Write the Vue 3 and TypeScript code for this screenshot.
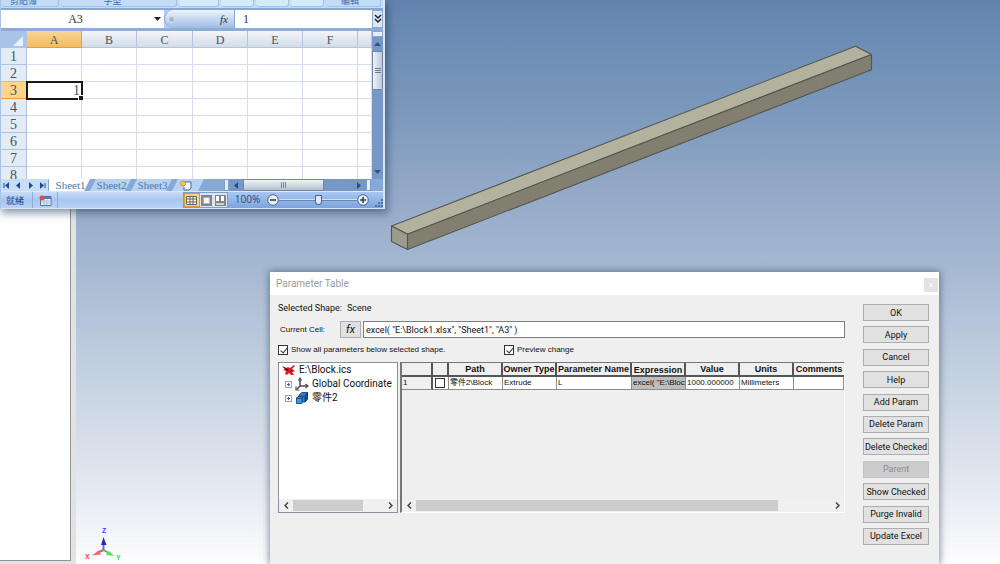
<script setup lang="ts">
import { ref } from 'vue'

interface Action { label: string; disabled?: boolean }

const columns: string[] = ['A', 'B', 'C', 'D', 'E', 'F', '']
const rows: number[] = [1, 2, 3, 4, 5, 6, 7, 8]
const sheets: string[] = ['Sheet1', 'Sheet2', 'Sheet3']
const cellName = ref('A3')
const cellValue = ref('1')
const expression = ref('excel( "E:\\Block1.xlsx", "Sheet1", "A3" )')
const showAll = ref(true)
const preview = ref(true)
const rowChecked = ref(false)
const zoomLevel = ref(50)

const headings: string[] = ['', '', 'Path', 'Owner Type', 'Parameter Name', 'Expression', 'Value', 'Units', 'Comments']
const actions: Action[] = [
  { label: 'OK' },
  { label: 'Apply' },
  { label: 'Cancel' },
  { label: 'Help' },
  { label: 'Add Param' },
  { label: 'Delete Param' },
  { label: 'Delete Checked' },
  { label: 'Parent', disabled: true },
  { label: 'Show Checked' },
  { label: 'Purge Invalid' },
  { label: 'Update Excel' },
]
</script>

<template>
  <div class="desktop">
    <aside class="side"><div class="side-page"></div></aside>
    <main class="viewport"></main>
    <svg class="scene" viewBox="0 0 1000 564" preserveAspectRatio="xMinYMin meet" aria-label="Block model">
      <g stroke="#55564f" stroke-width="1.1" stroke-linejoin="round">
        <path d="M391.5 226 855.5 46.3 871.5 54.5 407.5 234.2Z" fill="#b2b29f" />
        <path d="M407.5 234.2 871.5 54.5V69.7L407.5 249.5Z" fill="#827f71" />
        <path d="M391.5 226 407.5 234.2V249.5L391.5 241.5Z" fill="#9b9b90" />
      </g>
      <g class="axes">
        <path d="M103.5 550V543" stroke="#6868e8" stroke-width="2" />
        <path d="M103.5 537 106.5 545H101Z" fill="#2c2caa" />
        <path d="M103.5 550 98 552.5" stroke="#d06060" stroke-width="2" />
        <path d="M92 555.5 98.5 550.5 101 554.5Z" fill="#f06868" />
        <path d="M103.5 550 108 552.5" stroke="#50b850" stroke-width="2" />
        <path d="M114 556 106 555 109 551Z" fill="#50e060" />
        <text x="102" y="533" fill="#4444ff">Z</text>
        <text x="85" y="559" fill="#ff4444">X</text>
        <text x="116" y="560" fill="#33dd44">Y</text>
      </g>
    </svg>

    <section class="excel" aria-label="Spreadsheet">
      <div class="ribbon">
        <span class="group clip">剪貼簿</span>
        <span class="group font">字型</span>
        <span class="group light wide"></span>
        <span class="group light"></span>
        <span class="group light"></span>
        <span class="group light"></span>
        <span class="group edit">編輯</span>
      </div>
      <div class="formula">
        <input v-model="cellName" class="name-box" aria-label="Name box" />
        <button class="drop" aria-label="Cell names"><svg width="7" height="4" viewBox="0 0 7 4"><path d="M0 0H7L3.500 4Z" fill="#222" /></svg></button>
        <button class="fx-strip" aria-label="Insert function"><span class="knob"></span><i>fx</i></button>
        <input v-model="cellValue" class="value-box" aria-label="Formula bar" />
        <button class="expand" aria-label="Expand"><svg width="8" height="10" viewBox="0 0 8 10" fill="none" stroke="#222" stroke-width="1.500"><path d="M1 1 4 4 7 1M1 5 4 8 7 5" /></svg></button>
      </div>
      <div class="sheet-area">
        <div class="sheet-clip">
          <table class="sheet">
            <colgroup>
              <col class="c-head" />
              <col v-for="(c, i) in columns" :key="i" :class="c ? 'c-' + c : 'c-rest'" />
            </colgroup>
            <thead>
              <tr>
                <th class="corner"><svg width="10" height="10" viewBox="0 0 10 10"><path d="M10 0V10H0Z" fill="#e9f0fa" /></svg></th>
                <th v-for="(c, i) in columns" :key="i" :class="{ on: c === 'A' }">{{ c }}</th>
              </tr>
            </thead>
            <tbody>
              <tr v-for="r in rows" :key="r">
                <th :class="{ on: r === 3 }">{{ r }}</th>
                <td v-for="(c, i) in columns" :key="i" :class="{ active: r === 3 && c === 'A' }">{{ r === 3 && c === 'A' ? cellValue : '' }}</td>
              </tr>
            </tbody>
          </table>
        </div>
        <div class="vbar">
          <span class="split"></span>
          <button aria-label="Scroll up"><svg width="7" height="4" viewBox="0 0 7 4"><path d="M0 4H7L3.500 0Z" fill="#35517f" /></svg></button>
          <span class="vthumb"><b></b><b></b><b></b></span>
          <button class="down" aria-label="Scroll down"><svg width="7" height="4" viewBox="0 0 7 4"><path d="M0 0H7L3.500 4Z" fill="#35517f" /></svg></button>
        </div>
      </div>
      <div class="tabs">
        <div class="navs">
          <button aria-label="First sheet"><svg width="7" height="7" viewBox="0 0 7 7"><path d="M1 1V6" stroke="#1d4b9a" /><path d="M6 0V7L2 3.500Z" fill="#1d4b9a" /></svg></button>
          <button aria-label="Previous sheet"><svg width="7" height="7" viewBox="0 0 7 7"><path d="M5 0V7L1 3.500Z" fill="#1d4b9a" /></svg></button>
          <button aria-label="Next sheet"><svg width="7" height="7" viewBox="0 0 7 7"><path d="M2 0V7L6 3.500Z" fill="#1d4b9a" /></svg></button>
          <button aria-label="Last sheet"><svg width="7" height="7" viewBox="0 0 7 7"><path d="M6 1V6" stroke="#1d4b9a" /><path d="M1 0V7L5 3.500Z" fill="#1d4b9a" /></svg></button>
        </div>
        <button v-for="(s, i) in sheets" :key="s" class="tab" :class="{ front: i === 0 }">{{ s }}</button>
        <button class="tab new" aria-label="New sheet"><svg width="14" height="11" viewBox="0 0 14 11"><path d="M4 2H12V8L10 10H5V7" fill="#f4f7fc" stroke="#4b6895" /><circle cx="4" cy="3.500" r="2.500" fill="#f7c565" stroke="#d3902e" /></svg></button>
        <span class="tab-rest"></span>
        <span class="grip"></span>
        <button class="arrow" aria-label="Scroll left"><svg width="4" height="7" viewBox="0 0 4 7"><path d="M4 0V7L0 3.500Z" fill="#2b4a80" /></svg></button>
        <span class="hthumb"><b></b><b></b><b></b></span>
        <span class="htrack"></span>
        <button class="arrow" aria-label="Scroll right"><svg width="4" height="7" viewBox="0 0 4 7"><path d="M0 0V7L4 3.500Z" fill="#2b4a80" /></svg></button>
        <span class="grip"></span>
      </div>
      <div class="status">
        <span class="ready">就緒</span>
        <button class="macro" aria-label="Record macro"><svg width="13" height="11" viewBox="0 0 13 11"><path d="M1.500 1.500H12V10.500H1.500Z" fill="#f6f9ff" stroke="#5274ad" /><path d="M2 2H12V4H2Z" fill="#4c79bf" /><path d="M5 4V10M8 4V10M2 6H12M2 8H12" stroke="#a9bddb" /><circle cx="3" cy="3" r="2.500" fill="#dd4f35" /></svg></button>
        <span class="status-rest"></span>
        <div class="views">
          <button class="on" aria-label="Normal"><svg width="13" height="11" viewBox="0 0 13 11"><path d="M1.500 1.500H11.500V9.500H1.500ZM5 1V10M8 1V10M1 4H12M1 7H12" fill="#fff" stroke="#65625b" /></svg></button>
          <button aria-label="Page layout"><svg width="13" height="11" viewBox="0 0 13 11"><path d="M1 0H12V11H1Z" fill="#858585" /><path d="M3.500 2.500H9.500V8.500H3.500Z" fill="#f5f5f5" stroke="#b5b5b5" /></svg></button>
          <button aria-label="Page break"><svg width="13" height="11" viewBox="0 0 13 11"><path d="M1 0H12V11H1Z" fill="#858585" /><path d="M2 1H5V6H2ZM7 1H10V6H7Z" fill="#fff" /><path d="M2 8H10V10H2Z" fill="#d0d0d0" /></svg></button>
        </div>
        <span class="percent">100%</span>
        <button class="round" aria-label="Zoom out"><svg width="12" height="12" viewBox="0 0 12 12"><circle cx="6" cy="6" r="5.300" fill="#e9eef6" stroke="#4d6389" /><path d="M3 6H9" stroke="#33435e" stroke-width="1.600" /></svg></button>
        <input v-model="zoomLevel" class="zoom" type="range" min="0" max="100" aria-label="Zoom" />
        <button class="round" aria-label="Zoom in"><svg width="12" height="12" viewBox="0 0 12 12"><circle cx="6" cy="6" r="5.300" fill="#e9eef6" stroke="#4d6389" /><path d="M3 6H9M6 3V9" stroke="#33435e" stroke-width="1.600" /></svg></button>
        <span class="resize"><svg width="8" height="9" viewBox="0 0 8 9"><path d="M6 0H8V2H6ZM3 3H5V5H3ZM6 3H8V5H6ZM0 6H2V8H0ZM3 6H5V8H3ZM6 6H8V8H6Z" fill="#4c6ea8" /></svg></span>
      </div>
    </section>

    <section class="dialog" role="dialog" aria-label="Parameter Table">
      <header class="title"><span>Parameter Table</span><button aria-label="Close">x</button></header>
      <div class="body">
        <div class="content">
          <p class="selected"><span>Selected Shape:</span><span>Scene</span></p>
          <div class="cell-row">
            <label for="expr">Current Cell:</label>
            <button aria-label="Function"><i>fx</i></button>
            <input id="expr" v-model="expression" />
          </div>
          <div class="checks">
            <label><input v-model="showAll" type="checkbox" />Show all parameters below selected shape.</label>
            <label><input v-model="preview" type="checkbox" />Preview change</label>
          </div>
          <div class="panes">
            <div class="tree">
              <ul>
                <li class="root"><svg width="14" height="12" viewBox="0 0 14 12"><path d="M0 2 4 4 6 3 8 4 12 1 13 2 10 5 13 7 10 8 12 11 9 11 7 9 5 11 3 10 4 7 1 6 3 5Z" fill="#e01c24" /><path d="M0 2 4 4 7 6 5 7Z" fill="#4a1014" /><path d="M8 6 12 7 9 8Z" fill="#7c1218" /></svg>E:\Block.ics</li>
                <li><span class="plus"></span><svg width="14" height="14" viewBox="0 0 14 14" fill="none" stroke="#4a4a4a" stroke-width="1.500"><path d="M5 2V9H13M5 9 2 12" /><path d="M3.500 3.500 5 1 6.500 3.500M10.500 7 13 9 10.500 11M1 9.500V13H4.500" stroke-width="1.200" /></svg>Global Coordinate</li>
                <li><span class="plus"></span><svg width="14" height="14" viewBox="0 0 14 14" stroke="#0d335f" stroke-width=".8"><path d="M4 4 7 1.500H12.500V8L10 11H4Z" fill="#2c7fd0" /><path d="M10 4.500V11L12.500 8V1.500Z" fill="#15569d" /><path d="M1.500 7H7V12.500H1.500Z" fill="#3b98e6" /><path d="M1.500 7 3 5.500H8.500L7 7Z" fill="#72b9f2" /></svg>零件2</li>
              </ul>
              <div class="scroll">
                <button aria-label="Scroll left"><svg width="5" height="7" viewBox="0 0 5 7"><path d="M4 .5 1 3.500 4 6.500" /></svg></button>
                <span class="thumb"></span>
                <button aria-label="Scroll right"><svg width="5" height="7" viewBox="0 0 5 7"><path d="M1 .5 4 3.500 1 6.500" /></svg></button>
              </div>
            </div>
            <div class="grid">
              <table>
                <colgroup><col class="g-num" /><col class="g-check" /><col class="g-cell" /><col class="g-cell" /><col class="g-name" /><col class="g-expr" /><col class="g-cell" /><col class="g-cell" /><col /></colgroup>
                <thead><tr><th v-for="(h, i) in headings" :key="i" :class="{ low: i === 5 }">{{ h }}</th></tr></thead>
                <tbody>
                  <tr>
                    <td class="index">1</td>
                    <td class="tick"><input v-model="rowChecked" type="checkbox" aria-label="Select parameter 1" /></td>
                    <td>零件2\Block</td>
                    <td>Extrude</td>
                    <td>L</td>
                    <td class="picked">excel( "E:\Bloc</td>
                    <td>1000.000000</td>
                    <td>Millimeters</td>
                    <td></td>
                  </tr>
                </tbody>
              </table>
              <div class="scroll">
                <button aria-label="Scroll left"><svg width="5" height="7" viewBox="0 0 5 7"><path d="M4 .5 1 3.500 4 6.500" /></svg></button>
                <span class="thumb"></span>
                <button aria-label="Scroll right"><svg width="5" height="7" viewBox="0 0 5 7"><path d="M1 .5 4 3.500 1 6.500" /></svg></button>
              </div>
            </div>
          </div>
        </div>
        <div class="actions">
          <button v-for="a in actions" :key="a.label" :disabled="a.disabled">{{ a.label }}</button>
        </div>
      </div>
    </section>
  </div>
</template>

<style>
body { margin: 0; overflow: hidden; }
</style>

<style scoped>
* { box-sizing: border-box; }
button, input { font: inherit; color: inherit; margin: 0; padding: 0; border: 0; background: none; border-radius: 0; outline: 0; min-width: 0; }
button { display: flex; align-items: center; justify-content: center; }
svg { display: block; flex: none; }
.desktop { position: relative; display: flex; height: 100vh; overflow: hidden; background: #ececec; font-family: "Liberation Sans", "Noto Sans CJK TC", sans-serif; }
.side { flex: 0 0 76px; padding: 0 5px 3px 0; background: #e2e2e3; }
.side-page { height: 100%; background: #fefefe; border-right: 1px solid #8f9499; border-bottom: 1px solid #8f9499; }
.viewport { flex: 1; background: linear-gradient(#6184ae 0%, #6a8bb4 6%, #7c99bb 20%, #93a8c7 33%, #a5b8d2 47%, #cdd8e5 72%, #e3e8f1 86%, #fdfdfe 100%); }
.scene { position: absolute; inset: 0; width: 100%; }
.axes text { font: bold 7px "Liberation Sans", sans-serif; }

.excel { position: absolute; left: 0; top: 0; right: 61.5%; background: #b4cdf0; border-right: 2px solid #d8e6f7; border-left: 1px solid #a8c3e8; border-bottom: 1px solid #dbe6f4; box-shadow: 2px 3px 8px 1px #1e3a5c88; color: #44555a; font-family: "Liberation Serif", "Noto Sans CJK TC", serif; }
.ribbon { display: flex; gap: 2px; height: 10px; padding: 0 2px 3px 0; overflow: hidden; background: #c2daf5; border-bottom: 2px solid #86a7d4; }
.group { flex: 1 0 32px; height: 7px; overflow: hidden; display: flex; align-items: flex-end; justify-content: center; background: #c4dbf5; border: solid #a5c3e6; border-width: 0 1px 1px 0; border-radius: 0 0 3px 3px; font-size: 9px; line-height: 9px; color: #3f6cac; }
.group.light { background: #d5ebfa; }
.group.wide { flex-basis: 39px; }
.group.clip { flex-basis: 57px; padding-right: 12px; }
.group.font { flex-basis: 115px; padding-right: 12px; }
.group.edit { flex-basis: 54px; padding-right: 6px; }
.formula { display: flex; height: 18px; background: #b7cdec; font-size: 12px; color: #333; }
.name-box { flex: 0 0 149px; background: #fff; text-align: center; }
.drop { flex: 0 0 14px; background: #fff; }
.fx-strip { flex: 0 0 71px; justify-content: space-between; padding: 0 6px 0 3px; border: 1px solid #86a6d2; border-width: 0 1px 0 1px; border-radius: 9px 0 0 9px; background: linear-gradient(#edf4fd, #9fbce3); font-size: 11px; }
.knob { width: 7px; height: 7px; border-radius: 50%; background: #a9b5c7; border: 1px solid #dce5f1; }
.value-box { flex: 1; padding-left: 8px; background: #fff; }
.expand { flex: 0 0 11px; background: #dce7f5; border: 1px solid #8da9cf; }
.sheet-area { display: flex; height: 151px; border-top: 3px solid #8eacd6; }
.sheet-clip { flex: 1; min-width: 0; overflow: hidden; background: #fff; }
.sheet { width: 100%; table-layout: fixed; border-collapse: separate; border-spacing: 0; }
.c-head { width: 26px; }
.c-A, .c-B, .c-D, .c-E, .c-F { width: 55px; }
.c-C { width: 56px; }
.sheet th, .sheet td { height: 17px; padding: 2px 0 0; border: solid #d5dcec; border-width: 0 1px 1px 0; font-weight: 400; line-height: 14px; }
.sheet thead th { font-size: 12px; background: linear-gradient(#f3f6fa, #d3dbe8); border-color: #b4c4dc; }
.sheet thead .on { background: linear-gradient(#f9d597, #f0bd60); border-color: #ec9b3e; }
.sheet thead .corner { background: #a9c4ea; }
.corner svg { margin: 1px 3px 0 auto; }
.sheet tbody th { background: #e3ebf6; border-color: #aec3e0; font-size: 14px; }
.sheet tbody .on { background: #ffd58d; border-color: #ec9b3e; }
.sheet .active { position: relative; text-align: right; padding-right: 1px; font-size: 14px; outline: 2px solid #181818; outline-offset: -1px; }
.active::after { content: ""; position: absolute; right: -2px; bottom: -2px; width: 4px; height: 4px; background: #181818; border: solid #fff; border-width: 1px 0 0 1px; }
.vbar { flex: 0 0 11px; display: flex; flex-direction: column; background: #7598c8; }
.split { height: 6px; background: #e6eff9; border: 1px solid #87a5cf; }
.vbar button { height: 14px; }
.vthumb { height: 39px; display: flex; flex-direction: column; align-items: center; justify-content: center; gap: 1px; border: 1px solid #7286a5; background: linear-gradient(90deg, #f0f3f7, #bdc8d8); }
.vthumb b { width: 6px; height: 1px; background: #6d7b90; }
.vbar .down { margin-top: auto; }
.tabs { display: flex; height: 12px; padding-right: 12px; background: #87a9d8; font-size: 11px; line-height: 12px; color: #4c76a8; }
.navs { flex: 0 0 48px; display: flex; justify-content: space-around; background: #c7dcf6; border-right: 1px solid #88a7d2; }
.tab { flex: 0 0 41px; padding-left: 2px; background: #b9d2f2; clip-path: polygon(6px 0, 100% 0, calc(100% - 6px) 100%, 0 100%); }
.tab.front { background: #fff; clip-path: polygon(0 0, 100% 0, calc(100% - 6px) 100%, 0 100%); }
.tab.new { flex-basis: 32px; padding: 0 4px 0 0; }
.tab-rest { flex: 1; }
.grip { flex: 0 0 5px; background: #e5effb; border: 1px solid #7d9dcb; }
.arrow { flex: 0 0 14px; background: #7598c8; }
.hthumb { flex: 0 0 81px; display: flex; gap: 1px; align-items: center; justify-content: center; border: 1px solid #7286a5; background: linear-gradient(#f0f3f7, #b4bfcf); }
.hthumb b { width: 1px; height: 6px; background: #7a8799; }
.htrack { flex: 0 0 28px; background: #7598c8; }
.status { display: flex; align-items: center; height: 17px; border-top: 1px solid #d9e8fb; background: linear-gradient(#c9ddf7, #a8c6ef 50%, #b9d2f4); font: 10px "Open Sans", "Noto Sans CJK TC", sans-serif; color: #254a87; }
.ready { flex: 0 0 31px; padding-left: 5px; font-size: 9px; }
.macro { flex: 0 0 26px; align-self: stretch; border: solid #8eacd6; border-width: 0 1px; }
.status-rest { flex: 1; }
.views { display: flex; flex: 0 0 45px; align-self: stretch; border: 1px solid #7c9dcd; background: #dbe5f1; }
.views button { flex: 1; }
.views .on { background: #ffd77c; border: 1px solid #d49a38; }
.percent { flex: 0 0 39px; text-align: center; align-self: stretch; background: linear-gradient(#a9c7f1, #7da4dd); line-height: 15px; }
.round { flex: 0 0 12px; align-self: stretch; background: linear-gradient(#a9c7f1, #7da4dd); }
.zoom { flex: 0 0 78px; align-self: stretch; appearance: none; background: linear-gradient(#a9c7f1, #7da4dd); }
.zoom::-webkit-slider-runnable-track { height: 2px; background: #d5e2f4; border-bottom: 1px solid #6686b8; }
.zoom::-webkit-slider-thumb { appearance: none; width: 7px; height: 10px; margin-top: -4px; background: #dfe8f4; border: 1px solid #4d6389; border-radius: 1px 1px 4px 4px; }
.resize { flex: 0 0 14px; align-self: stretch; display: flex; align-items: flex-end; justify-content: flex-end; background: linear-gradient(#a9c7f1, #7da4dd); }

.dialog { position: absolute; left: 27%; right: 6.1%; top: 272px; bottom: 0; background: #efefef; box-shadow: 0 0 7px 1px #26385688; color: #111; font-family: Roboto, "Liberation Sans", "Noto Sans CJK TC", sans-serif; font-size: 9px; line-height: 12px; }
.title { display: flex; align-items: center; justify-content: space-between; height: 23px; padding: 0 1px 0 6px; background: #fff; color: #9b9b9b; font-size: 10px; }
.title button { width: 14px; height: 14px; margin-top: 3px; background: #e4e4e4; color: #fff; font-size: 8px; }
.body { display: flex; gap: 18px; padding: 0 10px 0 8px; }
.content { flex: 1; min-width: 0; }
.selected { display: flex; align-items: center; gap: 5px; height: 26px; margin: 0; }
.cell-row { display: flex; height: 17px; align-items: stretch; }
.cell-row label { flex: 0 0 62px; padding: 3px 0 0 2px; font-family: "Liberation Sans", sans-serif; font-size: 8px; }
.cell-row button { flex: 0 0 21px; margin-right: 2px; background: #e1e1e1; border: 1px solid #adadad; font-size: 11px; }
.cell-row input { flex: 1; padding: 0 2px; background: #fff; border: 1px solid #7e7e7e; }
.checks { display: grid; grid-template-columns: 226px 1fr; height: 24px; align-items: center; font-family: "Liberation Sans", sans-serif; font-size: 8px; }
.checks label { display: flex; align-items: center; gap: 3px; white-space: nowrap; }
input[type="checkbox"] { appearance: none; flex: none; display: block; position: relative; width: 10px; height: 10px; background: #fff; border: 1px solid #333; }
input[type="checkbox"]:checked::after { content: ""; position: absolute; left: 3px; top: 0; width: 3px; height: 6px; border: solid #333; border-width: 0 1px 1px 0; transform: rotate(40deg); }
.panes { display: flex; gap: 2px; height: 151px; }
.tree { flex: 0 0 120px; display: flex; flex-direction: column; background: #fff; border: 1px solid #8b8e9b; overflow: hidden; }
.tree ul { flex: 1; margin: 0; padding: 0 0 0 3px; list-style: none; font-size: 10px; }
.tree li { display: flex; align-items: center; height: 14px; gap: 3px; padding-left: 3px; white-space: nowrap; }
.tree .root { padding-left: 0; }
.plus { flex: none; width: 7px; height: 7px; border: 1px solid #a3a3a3; background: linear-gradient(#3c5ca8, #3c5ca8) center / 3px 1px no-repeat, linear-gradient(#3c5ca8, #3c5ca8) center / 1px 3px no-repeat, #fff; }
.scroll { display: flex; height: 13px; margin-top: auto; background: #f0f0f0; }
.scroll button { flex: 0 0 14px; }
.scroll button:last-child { margin-left: auto; }
.scroll path { fill: none; stroke: #444; stroke-width: 1.500; }
.scroll .thumb { margin: 1px 0; background: #cdcdcd; }
.tree .thumb { flex: 0 0 70px; }
.grid { flex: 1; min-width: 0; display: flex; flex-direction: column; overflow: hidden; border: solid #777; border-width: 1px 1px 1px 2px; border-right-color: #fff; border-bottom-color: #fff; }
.grid .thumb { flex: 0 1 82%; }
.grid table { width: 100%; table-layout: fixed; border-collapse: separate; border-spacing: 0; font: 9px/10px "Liberation Sans", "Noto Sans CJK TC", sans-serif; }
.g-num { width: 31px; }
.g-check { width: 16px; }
.g-cell, .g-expr { width: 54px; }
.g-name { width: 75px; }
.grid th { height: 14px; padding: 0; background: #efefef; border: solid #555; border-width: 0 2px 2px 0; white-space: nowrap; overflow: hidden; }
.grid th.low { padding-top: 2px; }
.grid th:last-child { border-right: 0; }
.grid td { height: 13px; padding: 0 1px; background: #fff; border: solid #8c8c8c; border-width: 0 1px 1px 0; font-size: 8px; white-space: nowrap; overflow: hidden; }
.grid .index { background: #efefef; border-right: 2px solid #555; }
.grid .tick { padding: 0 2px; }
.grid .picked { background: #bdbdbd; }
.actions { flex: 0 0 66px; display: flex; flex-direction: column; justify-content: space-between; height: 241px; margin-top: 9px; }
.actions button { height: 17px; background: #e1e1e1; border: 1px solid #adadad; white-space: nowrap; }
.actions button:disabled { background: #cccccc; border-color: #c3c3c3; color: #8e8e8e; }
</style>
